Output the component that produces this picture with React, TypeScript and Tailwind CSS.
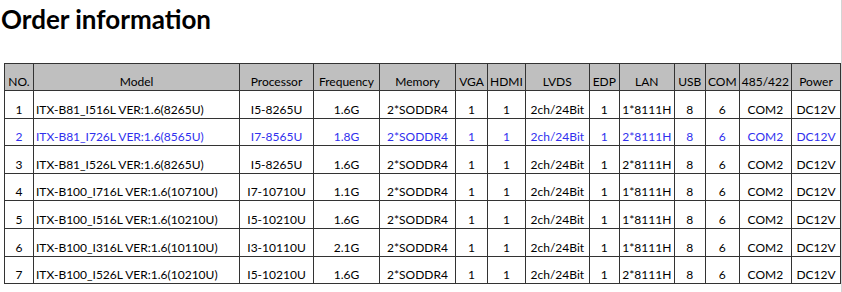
import React from 'react';

type Row = {
  no: number;
  model: string;
  cpu: string;
  freq: string;
  lan: string;
  hl?: boolean;
};

const rows: Row[] = [
  { no: 1, model: 'ITX-B81_I516L VER:1.6(8265U)', cpu: 'I5-8265U', freq: '1.6G', lan: '1*8111H' },
  { no: 2, model: 'ITX-B81_I726L VER:1.6(8565U)', cpu: 'I7-8565U', freq: '1.8G', lan: '2*8111H', hl: true },
  { no: 3, model: 'ITX-B81_I526L VER:1.6(8265U)', cpu: 'I5-8265U', freq: '1.6G', lan: '2*8111H' },
  { no: 4, model: 'ITX-B100_I716L VER:1.6(10710U)', cpu: 'I7-10710U', freq: '1.1G', lan: '1*8111H' },
  { no: 5, model: 'ITX-B100_I516L VER:1.6(10210U)', cpu: 'I5-10210U', freq: '1.6G', lan: '1*8111H' },
  { no: 6, model: 'ITX-B100_I316L VER:1.6(10110U)', cpu: 'I3-10110U', freq: '2.1G', lan: '1*8111H' },
  { no: 7, model: 'ITX-B100_I526L VER:1.6(10210U)', cpu: 'I5-10210U', freq: '1.6G', lan: '2*8111H' },
];

// column widths in px, left to right
const cols = [29, 206, 74, 66, 76, 32, 36, 64, 30, 55, 31, 34, 52, 49];
const headers = ['NO.', 'Model', 'Processor', 'Frequency', 'Memory', 'VGA', 'HDMI', 'LVDS', 'EDP', 'LAN', 'USB', 'COM', '485/422', 'Power'];

const cell = 'border border-[#333333] px-[2px] pb-[1px] align-bottom whitespace-nowrap leading-[15px]';

export default function App() {
  return (
    <div className="w-[842px] h-[292px] bg-white border-r border-[#d4d4d4] overflow-hidden" style={{ fontFamily: 'Lato, "Open Sans", sans-serif' }}>
      <h1 className="pt-[4px] pl-[1px] text-[26px] font-bold leading-[30px] text-black">
        Order information
      </h1>

      <table className="mt-[29px] ml-[4px] border-collapse table-fixed text-[12px] text-black">
        <colgroup>
          {cols.map((w, i) => (
            <col key={i} style={{ width: w }} />
          ))}
        </colgroup>
        <thead>
          <tr className="h-[27px] bg-[#bfbfbf]">
            {headers.map((h) => (
              <th key={h} className={`${cell} font-normal text-center`}>
                {h}
              </th>
            ))}
          </tr>
        </thead>
        <tbody>
          {rows.map((r) => (
            <tr key={r.no} className={`h-[27.6px] ${r.hl ? 'text-[#3030ee]' : ''}`}>
              <td className={`${cell} text-center`}>{r.no}</td>
              <td className={`${cell} text-left`}>{r.model}</td>
              <td className={`${cell} text-center`}>{r.cpu}</td>
              <td className={`${cell} text-center`}>{r.freq}</td>
              <td className={`${cell} text-center`}>2*SODDR4</td>
              <td className={`${cell} text-center`}>1</td>
              <td className={`${cell} text-center`}>1</td>
              <td className={`${cell} text-center`}>2ch/24Bit</td>
              <td className={`${cell} text-center`}>1</td>
              <td className={`${cell} text-center`}>{r.lan}</td>
              <td className={`${cell} text-center`}>8</td>
              <td className={`${cell} text-center`}>6</td>
              <td className={`${cell} text-center`}>COM2</td>
              <td className={`${cell} text-center`}>DC12V</td>
            </tr>
          ))}
        </tbody>
      </table>
    </div>
  );
}
